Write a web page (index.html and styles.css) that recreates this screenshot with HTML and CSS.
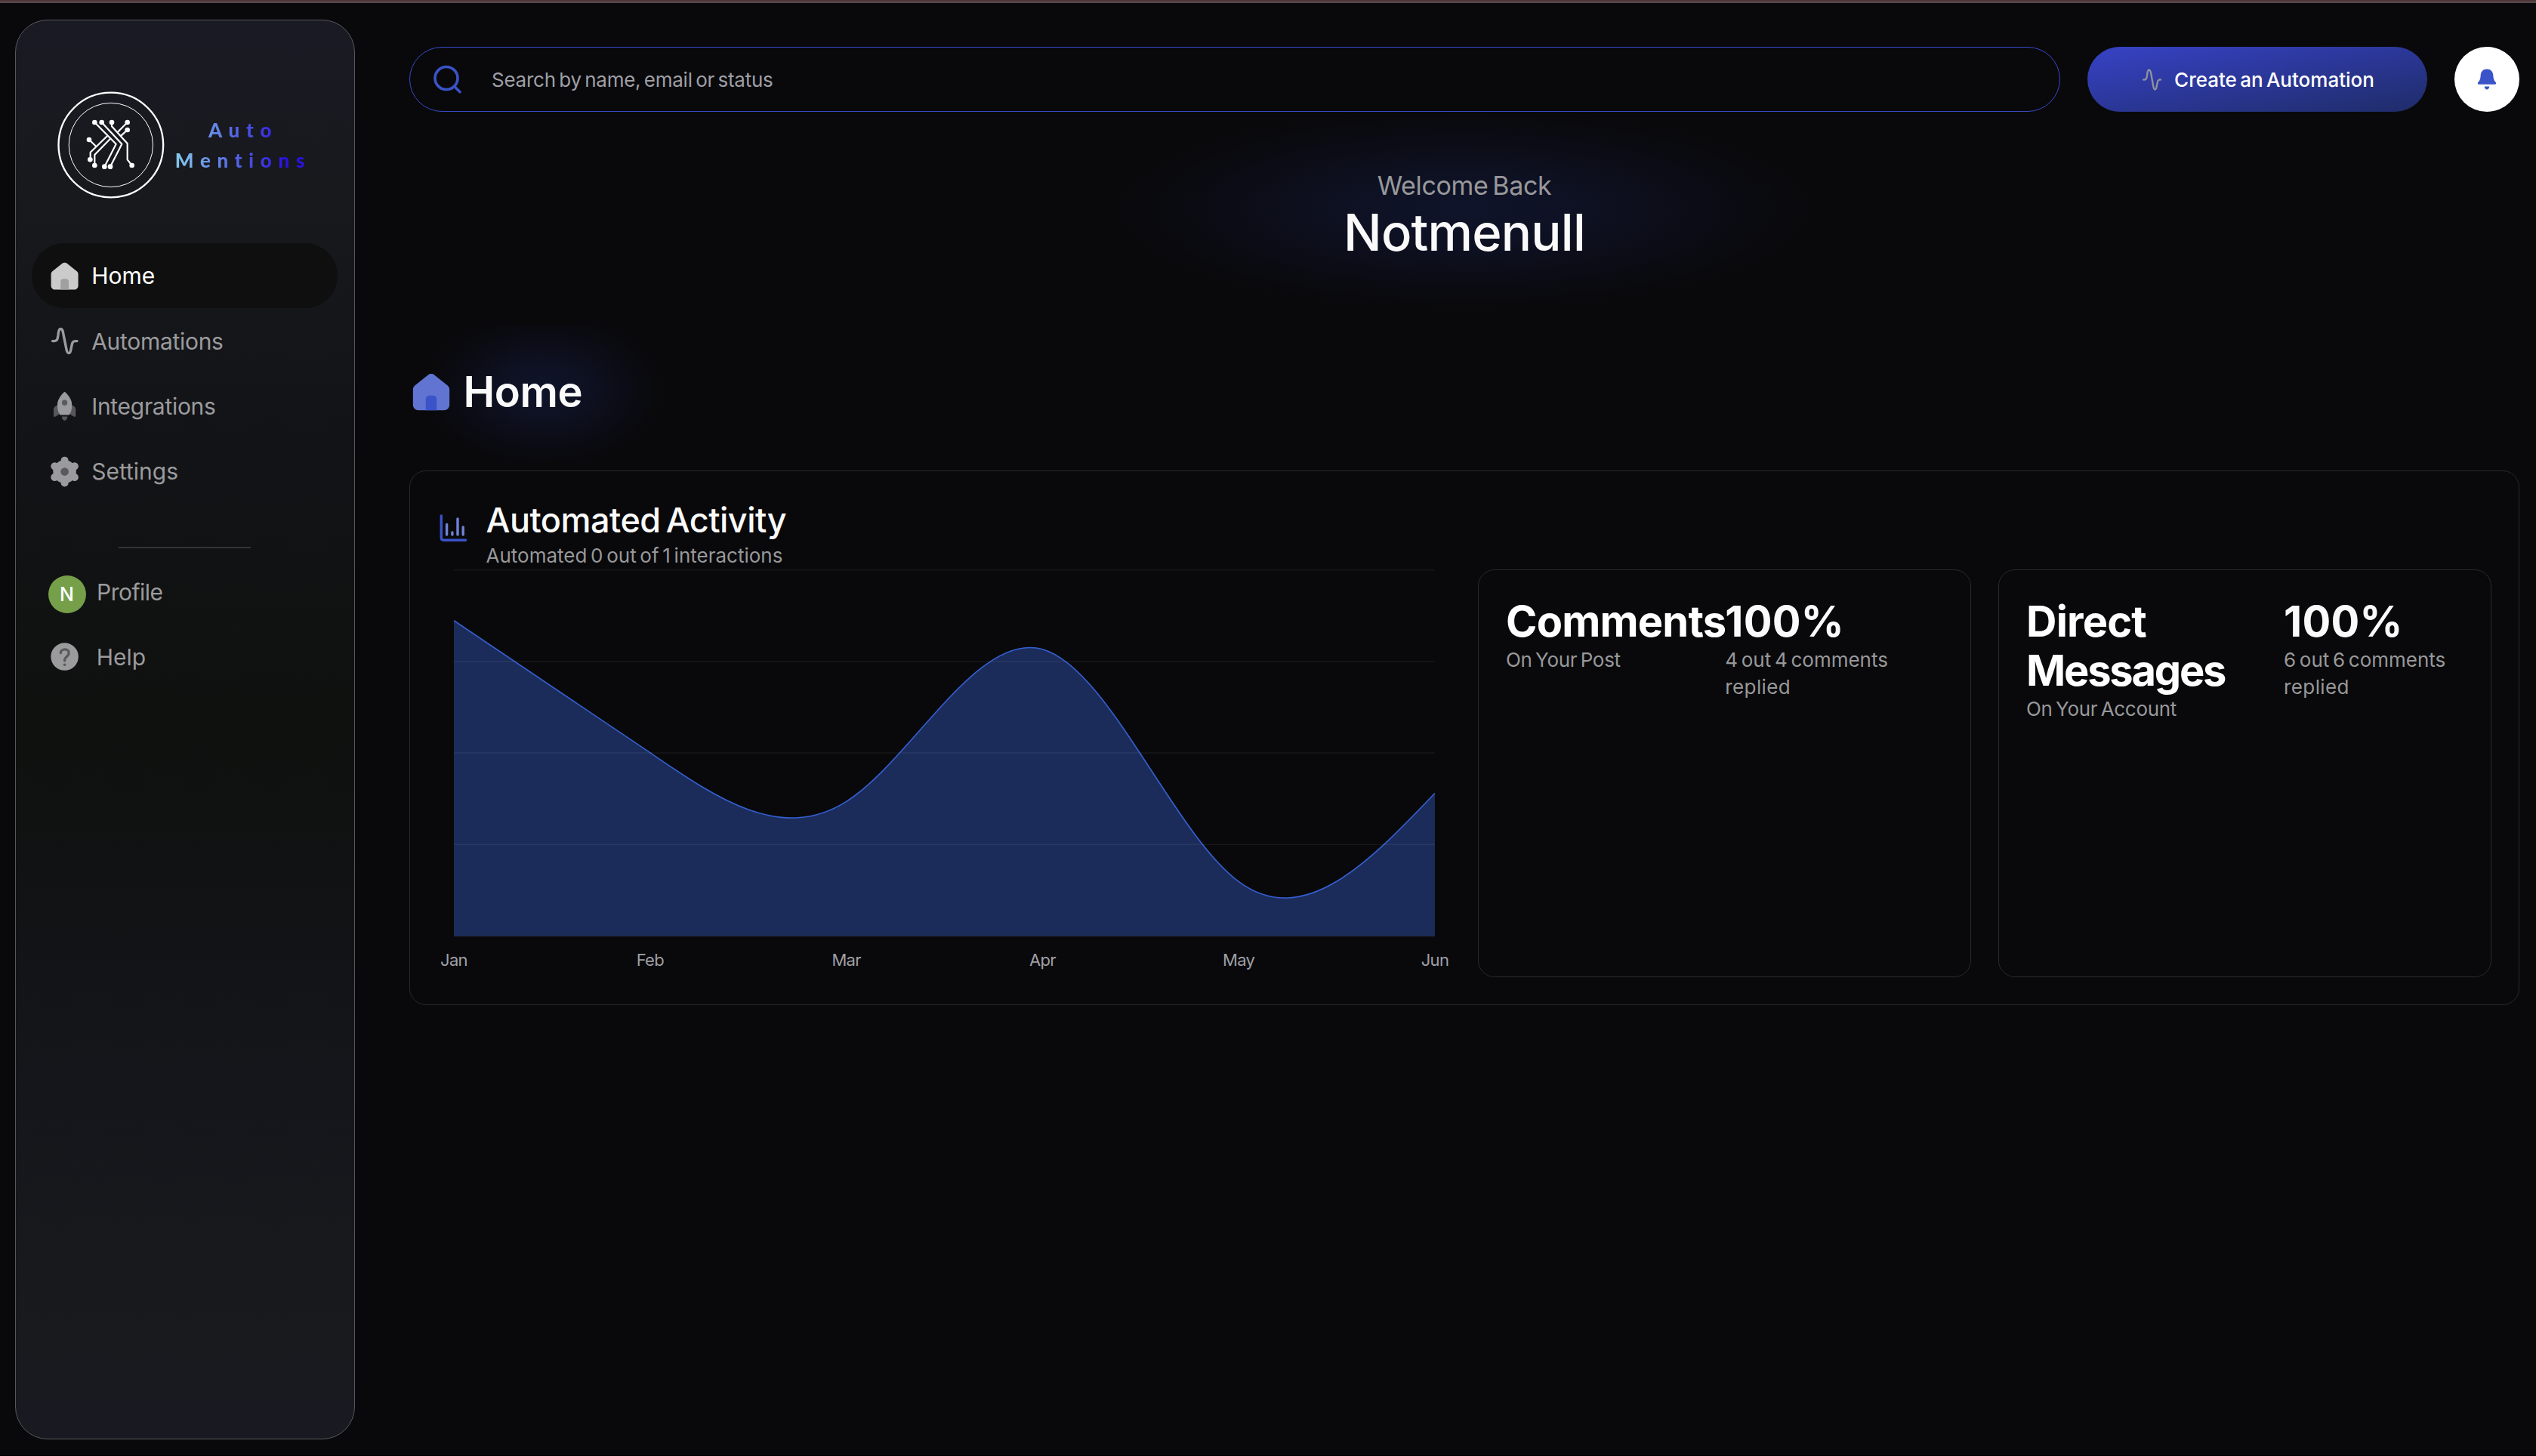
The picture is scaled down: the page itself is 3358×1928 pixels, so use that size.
FILE: index.html
```html
<!DOCTYPE html>
<html lang="en">
<head>
<meta charset="utf-8">
<title>Auto Mentions</title>
<link rel="stylesheet" href="styles.css">
</head>
<body>
<div class="top-strip"></div>
<div class="app">
  <aside class="sidebar">
    <div class="brand">
      <svg class="brand-mark" viewBox="0 0 510 510" fill="none" stroke="#fff">
        <circle cx="260.5" cy="246" r="208" stroke-width="7"/>
        <circle cx="260.5" cy="246" r="167" stroke-width="3"/>
        <g stroke-width="6.5" stroke-linejoin="round">
          <path d="M196 156 281 242 235 332"/>
          <path d="M224 156 304 242 258 332"/>
          <path d="M264 156V172L326 240V304L344 327"/>
          <path d="M326 156 288 194"/>
          <path d="M326 186 298 212"/>
          <path d="M174 225 203 253"/>
          <path d="M247 209 179 275V304"/>
          <path d="M258 221 196 285V327"/>
        </g>
        <g fill="#fff" stroke="none">
          <circle cx="196" cy="156" r="10"/><circle cx="224" cy="156" r="10"/><circle cx="264" cy="156" r="10"/>
          <circle cx="326" cy="156" r="10"/><circle cx="326" cy="186" r="10"/><circle cx="174" cy="225" r="10"/>
          <circle cx="178" cy="304" r="10"/><circle cx="196" cy="327" r="10"/><circle cx="235" cy="332" r="10"/>
          <circle cx="258" cy="332" r="10"/><circle cx="344" cy="327" r="10"/>
        </g>
      </svg>
      <div class="brand-name">Auto<br>Mentions</div>
    </div>
    <nav class="nav">
      <a class="nav-item active">
        <svg class="nav-icon" viewBox="0 0 24 24">
          <path fill="#cbcbcb" d="M2 10.6C2 9.8 2.4 9.1 3 8.5L10.3 2.7C11.3 1.9 12.7 1.9 13.7 2.7L21 8.5C21.6 9.1 22 9.8 22 10.6V19C22 20.7 20.7 22 19 22H5C3.3 22 2 20.7 2 19Z"/>
          <path fill="#a0a0a0" d="M9 22V16.2C9 14.8 9.8 14 11.2 14H12.8C14.2 14 15 14.8 15 16.2V22Z"/>
        </svg>
        <span>Home</span>
      </a>
      <a class="nav-item long">
        <svg class="nav-icon" viewBox="0 0 24 24" fill="none" stroke="#9b9b9e" stroke-width="1.9" stroke-linecap="round">
          <path d="M3.1 12H4.5C6.4 12 6.7 10.8 7.1 8.3C7.5 4.9 7.8 3.1 9.1 3.1C10.4 3.1 10.7 4.6 11.1 7L13.2 17.5C13.6 20 14 20.9 15 20.9C16.2 20.9 16.5 19.2 17 16.4C17.5 13.2 18 12 19.8 12H21.1"/>
        </svg>
        <span>Automations</span>
      </a>
      <a class="nav-item long">
        <svg class="nav-icon" viewBox="0 0 130 130">
          <path fill="#57575a" d="M40 61C29 64 21 69 21 79V104C21 109 26 109 30 106L44 98V61Z"/>
          <path fill="#57575a" d="M90 61C101 64 109 69 109 79V104C109 109 104 109 100 106L86 98V61Z"/>
          <path fill="#57575a" d="M54 107H76C76 118 70 123 65 123S54 118 54 107Z"/>
          <path fill="#9b9b9e" d="M65 8C80 20 94 40 94 60C94 80 89 95 82 101H48C41 95 36 80 36 60C36 40 50 20 65 8Z"/>
          <circle fill="#5a5a5d" cx="65" cy="52" r="11"/>
        </svg>
        <span>Integrations</span>
      </a>
      <a class="nav-item">
        <svg class="nav-icon" viewBox="0 0 130 130">
          <g fill="#9b9b9e">
            <circle cx="65" cy="65" r="46"/>
            <circle cx="65" cy="20" r="15"/><circle cx="65" cy="110" r="15"/>
            <circle cx="104.500" cy="43" r="15.500"/><circle cx="104.500" cy="87" r="15.500"/>
            <circle cx="25.500" cy="43" r="15.500"/><circle cx="25.500" cy="87" r="15.500"/>
          </g>
          <circle fill="#5a5a5d" cx="65" cy="65" r="16"/>
        </svg>
        <span>Settings</span>
      </a>
    </nav>
    <div class="divider"></div>
    <div class="nav">
      <a class="nav-item profile"><span class="avatar">N</span><span>Profile</span></a>
      <a class="nav-item help">
        <svg class="nav-icon" viewBox="0 0 130 130">
          <circle fill="#9b9b9e" cx="65" cy="65" r="55"/>
          <path fill="none" stroke="#5a5a5d" stroke-width="10" stroke-linecap="round" d="M49 50C50 31 82 31 82 50C82 66 65 62 65 81"/>
          <circle fill="#5a5a5d" cx="65" cy="97" r="5.500"/>
        </svg>
        <span>Help</span>
      </a>
    </div>
  </aside>

  <main class="main">
    <header class="topbar">
      <div class="search">
        <svg class="search-icon" viewBox="0 0 40 40" fill="none" stroke="#3a53c8" stroke-width="3.600" stroke-linecap="round">
          <circle cx="18" cy="18.500" r="15"/><path d="M28.700 29.500 36 36.700"/>
        </svg>
        <span>Search by name, email or status</span>
      </div>
      <button class="create">
        <svg class="create-icon" viewBox="3 2 18 20" fill="none" stroke="#90939c" stroke-width="1.700" stroke-linecap="round" preserveAspectRatio="none">
          <path d="M3.900 12H4.800C6.600 12 6.900 10.800 7.300 8.300C7.700 4.900 8 3.100 9.200 3.100C10.500 3.100 10.800 4.600 11.200 7L13.200 17.500C13.600 20 14 20.900 14.900 20.900C16 20.900 16.300 19.200 16.800 16.400C17.300 13.200 17.800 12 19.400 12H20.200"/>
        </svg>
        <span>Create an Automation</span>
      </button>
      <button class="bell">
        <svg class="bell-icon" viewBox="0 0 26 28">
          <path fill="#3a53c8" d="M13 .5C18 .5 21 4 21.300 8.500C21.600 13 22 15 24.300 17.500C26 19.600 25 20.800 23 20.800H3C1 20.800 0 19.600 1.700 17.500C4 15 4.400 13 4.700 8.500C5 4 8 .5 13 .5Z"/>
          <path fill="#9aa6e2" d="M3 20.500H23V21.300H3Z"/>
          <path fill="#3a53c8" d="M9.700 23.600H16.300C16.300 26 14.800 27.500 13 27.500S9.700 26 9.700 23.600Z"/>
        </svg>
      </button>
    </header>

    <section class="hero">
      <p class="welcome">Welcome Back</p>
      <h1 class="name">Notmenull</h1>
    </section>

    <section class="page-title">
      <svg class="title-icon" viewBox="0 0 24 24">
        <path fill="#6174d2" d="M2 10.600C2 9.800 2.400 9.100 3 8.500L10.300 2.700C11.300 1.900 12.700 1.900 13.700 2.700L21 8.500C21.600 9.100 22 9.800 22 10.600V19C22 20.700 20.700 22 19 22H5C3.300 22 2 20.700 2 19Z"/>
        <path fill="#3a53c8" d="M9 22V16.200C9 14.800 9.800 14 11.200 14H12.800C14.200 14 15 14.800 15 16.200V22Z"/>
      </svg>
      <h2>Home</h2>
    </section>

    <section class="card">
      <div class="card-head">
        <svg class="bars-icon" viewBox="0 0 38 38" fill="none" stroke-width="3.400" stroke-linecap="round">
          <path stroke="#3a53c8" d="M3.300 3V32C3.300 34.500 4.500 35.200 6.500 35.200H35.500" stroke-linejoin="round"/>
          <path stroke="#7082d6" d="M10.600 14.500V28M17.900 25V28M25 7V28M32.200 18V28"/>
        </svg>
        <div>
          <h3>Automated Activity</h3>
          <p>Automated 0 out of 1 interactions</p>
        </div>
      </div>
      <div class="card-body">
        <div class="chart">
          <svg class="plot" viewBox="0 0 1299 488">
            <path fill="#1c2c5a" d="M0 67.700C86.600 125.600 173.200 183.500 259.800 242.700S433 362.500 519.600 307.400S692.800 81.500 779.400 105.700S952.600 349.100 1039.200 413.400S1212.400 387 1299 296.400V485.500H0Z"/>
            <path fill="none" stroke="#3560d2" stroke-width="1.600" d="M0 67.700C86.600 125.600 173.200 183.500 259.800 242.700S433 362.500 519.600 307.400S692.800 81.500 779.400 105.700S952.600 349.100 1039.200 413.400S1212.400 387 1299 296.400"/>
            <path stroke="#fff" stroke-opacity=".06" stroke-width="1.500" d="M0 .75H1299M0 121.700H1299M0 243H1299M0 364.300H1299M0 485.800H1299"/>
          </svg>
          <div class="months"><span>Jan</span><span>Feb</span><span>Mar</span><span>Apr</span><span>May</span><span>Jun</span></div>
        </div>
        <div class="stat">
          <div><h4>Comments</h4><p>On Your Post</p></div>
          <div class="rate"><h5>100%</h5><p class="count">4 out 4 comments <span>replied</span></p></div>
        </div>
        <div class="stat dm">
          <div class="dm-name"><h4>Direct <span>Messages</span></h4><p>On Your Account</p></div>
          <div class="rate"><h5>100%</h5><p class="count">6 out 6 comments <span>replied</span></p></div>
        </div>
      </div>
    </section>
  </main>
</div>
</body>
</html>
```
FILE: styles.css
```css
* { box-sizing: border-box; margin: 0; padding: 0; }

body {
  height: 1928px;
  display: flex;
  flex-direction: column;
  background: #09090b;
  border-bottom: 1px solid #000;
  color: #fafafa;
  font-family: Inter, "Liberation Sans", sans-serif;
  overflow: hidden;
}

svg { display: block; flex: none; }
button { border: 0; font: inherit; color: inherit; }

.top-strip {
  height: 4px;
  background: linear-gradient(#503438 50%, #544a4d 50%);
}

.app { display: flex; gap: 72px; padding-left: 20px; }

/* Sidebar */
.sidebar {
  width: 450px;
  height: 1880px;
  margin-top: 22px;
  border: 1px solid #58585b;
  border-radius: 43px;
  background: linear-gradient(#1a1a24, #18191d 12%, #131418 27%, #111213 38%, #0f110f 50%, #111213 60%, #15161b 75%, #191a1e 93%, #191922);
}

.brand {
  display: flex;
  height: 295px;
  padding: 83px 0 0 39px;
}
.brand-mark { width: 170px; height: 170px; }
.brand-name {
  width: 186px;
  height: 80px;
  margin: 43px 0 0 -1px;
  text-align: center;
  font: 900 26px/39.6px Lato, sans-serif;
  letter-spacing: 8.700px;
  color: transparent;
  background: linear-gradient(90deg, #87ceeb, #2a12e0 80%);
  -webkit-background-clip: text;
  background-clip: text;
}

.nav { padding: 0 22px 0 21px; }
.nav-item {
  display: flex;
  align-items: center;
  gap: 14.500px;
  height: 86.400px;
  padding-left: 21.5px;
  border-radius: 43px;
  font-size: 30px;
  color: #9b9b9e;
}
.nav-item.active { background: #0f0f0f; color: #fff; }
.nav-item.long { letter-spacing: -.3px; }
.nav-icon { width: 43.200px; height: 43.200px; }
.nav-item.profile { gap: 14.500px; letter-spacing: -.5px; height: 86px; }
.nav-item.help { gap: 21px; height: 86px; }
.avatar {
  width: 50px;
  height: 50px;
  margin-top: 6px;
  border-radius: 50%;
  background: #759f49;
  color: #fff;
  text-align: center;
  font-size: 25px;
  font-weight: 500;
  line-height: 51px;
  letter-spacing: 0;
}
.divider {
  width: 175px;
  height: 2px;
  margin: 56px 0 15px 136px;
  background: #343437;
}

/* Main column */
.main { width: 2794px; padding-top: 58px; }

.topbar { display: flex; gap: 36px; height: 86px; }
.search {
  width: 2186px;
  display: flex;
  align-items: center;
  gap: 38px;
  padding-left: 30px;
  border: 1px solid #384ac8;
  border-radius: 43px;
  font-size: 26px;
  letter-spacing: -.25px;
  word-spacing: -2.600px;
  color: #9f9fa6;
}
.search-icon { width: 40px; height: 40px; }
.create {
  width: 450px;
  display: flex;
  align-items: center;
  justify-content: center;
  gap: 17px;
  padding-left: 3px;
  border-radius: 43px;
  background: linear-gradient(to bottom right, #3742c6, #1f2c68);
  color: #fff;
  font-size: 26px;
  font-weight: 500;
  word-spacing: -2.600px;
}
.create-icon { width: 25px; height: 29px; }
.bell {
  width: 86px;
  display: flex;
  align-items: center;
  justify-content: center;
  border-radius: 50%;
  background: #fff;
}
.bell-icon { width: 26px; height: 28px; }

.hero {
  height: 284px;
  padding-top: 71px;
  text-align: center;
  background: radial-gradient(465px 134px at 50% 129px, #10142b, #0e1122 35%, #0b0c15 68%, #09090b);
}
.welcome {
  font-size: 34px;
  line-height: 53px;
  letter-spacing: -.35px;
  word-spacing: -3.400px;
  color: #98989b;
}
.name {
  font-size: 67px;
  line-height: 71px;
  font-weight: 500;
  letter-spacing: -.8px;
}

.page-title {
  display: flex;
  align-items: center;
  gap: 13.500px;
  height: 191px;
  padding-bottom: 17px;
  background: radial-gradient(160px 102px at 178px 84px, #10142b, #0e1122 35%, #0b0c15 68%, #09090b);
}
.title-icon { width: 58px; height: 58px; }
.page-title h2 { font-size: 56px; line-height: 65px; font-weight: 600; letter-spacing: -.4px; }

/* Activity card */
.card {
  height: 708px;
  padding: 36px;
  border: 1px solid #29292c;
  border-radius: 22px;
}
.card-head { display: flex; gap: 24.500px; height: 94px; padding-left: 2px; }
.bars-icon { width: 38px; height: 38px; margin-top: 20px; }
.card-head h3 {
  font-size: 45px;
  line-height: 58px;
  font-weight: 500;
  letter-spacing: -.5px;
  word-spacing: -4.500px;
}
.card-head p {
  font-size: 26px;
  line-height: 36px;
  word-spacing: -2.600px;
  color: #98989a;
}
.card-body { display: flex; gap: 36px; height: 540px; }
.chart { width: 1342px; padding-left: 21.500px; }
.plot { width: 1299px; height: 488px; }
.months {
  display: flex;
  justify-content: space-between;
  margin: 16px -29px 0 -29.500px;
  width: 1359px;
  font-size: 22px;
  line-height: 26px;
  letter-spacing: -.7px;
  color: #9f9fa6;
}
.months span { width: 60px; text-align: center; }

.stat {
  display: flex;
  width: 653px;
  padding: 36px;
  border: 1px solid #29292c;
  border-radius: 22px;
}
.stat h4, .stat h5 { font-size: 56px; line-height: 65px; font-weight: 700; }
.stat h4 { color: #fff; letter-spacing: -.8px; }
.stat h5 { letter-spacing: .3px; }
.stat h4 span { display: block; letter-spacing: -2.200px; }
.stat p {
  font-size: 26px;
  line-height: 36px;
  letter-spacing: -.3px;
  word-spacing: -2.600px;
  color: #98989a;
}
.stat p.count { letter-spacing: 0; }
.count span { display: block; letter-spacing: .4px; }
.rate { margin-left: -1px; }
.dm-name { width: 341px; }
.dm .rate { margin-left: 0; }
```
